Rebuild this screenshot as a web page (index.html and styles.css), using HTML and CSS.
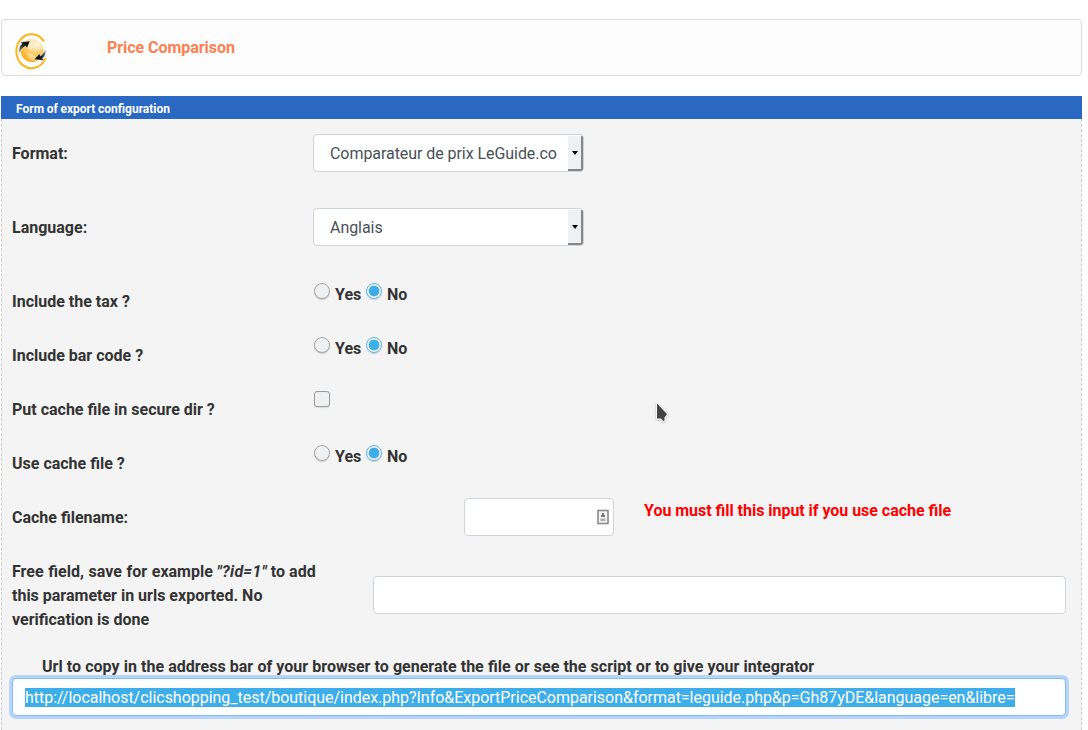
FILE: index.html
```html
<!DOCTYPE html>
<html lang="en">
<head>
<meta charset="utf-8">
<title>Price Comparison</title>
<link rel="stylesheet" href="styles.css">
</head>
<body>
<main class="page">
  <header class="heading">
    <svg class="logo" viewBox="0 0 34 38">
      <defs>
        <radialGradient id="globe" cx=".65" cy=".2" r=".9"><stop offset="0" stop-color="#fff3d4"/><stop offset=".5" stop-color="#fccb66"/><stop offset="1" stop-color="#f9a80c"/></radialGradient>
        <linearGradient id="arrow" x1="0" y1="1" x2="1" y2="0"><stop offset="0" stop-color="#ccc"/><stop offset=".5" stop-color="#222"/><stop offset="1" stop-color="#000"/></linearGradient>
        <linearGradient id="arrow2" x1="0" y1="1" x2="1" y2="0"><stop offset="0" stop-color="#000"/><stop offset=".5" stop-color="#222"/><stop offset="1" stop-color="#bbb"/></linearGradient>
      </defs>
      <path d="M30 9.500A15.200 17 0 1 0 31.500 26" fill="#fff" stroke="#fdb515" stroke-width="2"/>
      <circle cx="18" cy="18.500" r="11.500" fill="url(#globe)"/>
      <path d="M15 9l4-2 1 3-2 3 2 2-2 3-5-2zM21 8l6 2 2 6-4 3-5-4 2-4zM13 21l6 1 3 3-3 4-4-2z" fill="#fff" opacity=".35"/>
      <path d="M4.500 22.500C4.500 17 5.500 13 8 12L6.500 10 16 9 13 16.500 11.500 14C8 15.500 7 18.500 4.500 22.500z" fill="url(#arrow)" stroke="#fff" stroke-width=".5"/>
      <path d="M32 16.500C32 22 31 25 28.500 26L30 28.500 20 27.500 25.500 21.500 26.500 24C29 22 30 20 32 16.500z" fill="url(#arrow2)" stroke="#fff" stroke-width=".5"/>
    </svg>
    <h1 class="title">Price Comparison</h1>
  </header>
  <h2 class="bar">Form of export configuration</h2>
  <form class="panel">
    <div class="row tall">
      <span class="label">Format:</span>
      <div class="select"><span class="value">Comparateur de prix LeGuide.co</span><span class="drop"></span></div>
    </div>
    <div class="row tall">
      <span class="label">Language:</span>
      <div class="select"><span class="value">Anglais</span><span class="drop"></span></div>
    </div>
    <div class="row">
      <span class="label">Include the tax ?</span>
      <div class="options"><i class="radio"></i><span class="yes">Yes</span><i class="radio on"></i><span>No</span></div>
    </div>
    <div class="row">
      <span class="label">Include bar code ?</span>
      <div class="options"><i class="radio"></i><span class="yes">Yes</span><i class="radio on"></i><span>No</span></div>
    </div>
    <div class="row">
      <span class="label">Put cache file in secure dir ?</span>
      <div class="options"><i class="check"></i></div>
    </div>
    <div class="row">
      <span class="label">Use cache file ?</span>
      <div class="options"><i class="radio"></i><span class="yes">Yes</span><i class="radio on"></i><span>No</span></div>
    </div>
    <div class="row cache">
      <span class="label">Cache filename:</span>
      <div class="field">
        <svg class="card" viewBox="0 0 12 16"><rect x="1" y="1.500" width="10" height="13" fill="#f5f5f5" stroke="#8b8b8b" stroke-width="1.600"/><path d="M5 4h2v2h1v2H4V6h1z" fill="#777"/><path d="M3.500 9.500h5v2.500h-5z" fill="#aaa"/></svg>
      </div>
      <span class="warning">You must fill this input if you use cache file</span>
    </div>
    <div class="row free">
      <span class="label"><span class="lead">Free field, save for example</span> <em>"?id=1"</em> to add<br>this parameter in urls exported. No<br>verification is done</span>
      <div class="field"></div>
    </div>
    <div class="url-label">Url to copy in the address bar of your browser to generate the file or see the script or to give your integrator</div>
    <div class="field focused"><span class="selected">http://localhost/clicshopping_test/boutique/index.php?Info&amp;ExportPriceComparison&amp;format=leguide.php&amp;p=Gh87yDE&amp;language=en&amp;libre=</span></div>
  </form>
</main>
<svg class="cursor" viewBox="0 0 14 22"><path d="M1.500 1.500v16.500h4.500l2.500 2.500 1.500-.5v-3.500l2.500-3.500z" fill="#444" stroke="#fff"/></svg>
</body>
</html>
```
FILE: styles.css
```css
* { box-sizing: border-box; }
body {
  margin: 0;
  height: 730px;
  overflow: hidden;
  background: #fff;
  color: #333;
  font: 700 16px/24px Roboto, sans-serif;
}
.page {
  width: 1081px;
  height: 730px;
  margin-left: 1px;
  padding-top: 19px;
  display: flex;
  flex-direction: column;
}
.heading {
  display: flex;
  align-items: flex-start;
  height: 57px;
  margin-bottom: 20px;
  padding: 12px;
  background: #fdfdfd;
  border: 1px solid #ddd;
  border-radius: 4px;
}
.logo { width: 34px; height: 38px; }
.title {
  margin: 4px 0 0 59px;
  color: #ff7f50;
  font-size: 16px;
  line-height: 24px;
  letter-spacing: -0.05px;
}
.bar {
  height: 23px;
  margin: 0;
  padding-left: 15px;
  background: #2969c4;
  color: #fff;
  font-size: 12px;
  line-height: 27px;
  word-spacing: -0.3px;
}
.panel {
  flex: 1;
  padding: 15px 14px 0 10px;
  background: #f4f4f4;
  border: 1px dashed #ccc;
  border-width: 0 1px;
}
.row {
  display: grid;
  grid-template-columns: 301px 1fr;
  height: 54px;
}
.label { padding-top: 1px; }
.tall { height: 74px; }
.tall .label { padding-top: 8px; }
.tall + .row:not(.tall) { height: 61px; padding-top: 7px; }
.select {
  display: flex;
  width: 271px;
  height: 38px;
  background: #fff;
  border: 1px solid #ced4da;
  border-radius: 4px;
  color: #495057;
  font-weight: 400;
  overflow: hidden;
}
.value {
  width: 228px;
  margin: 7px 10px 0 16px;
  white-space: nowrap;
  letter-spacing: -0.06px;
}
.drop {
  display: flex;
  align-items: center;
  justify-content: center;
  width: 15px;
  margin-top: 1px;
  background: #eff0f1;
  border: solid #848688;
  border-width: 0 2px 2px 0;
}
.drop::before {
  content: "";
  margin-left: 1px;
  border: 3px solid transparent;
  border-top: 4px solid #000;
  border-bottom: 0;
}
.options { display: flex; align-items: flex-start; margin-top: -7px; }
.options span { width: 25px; padding-top: 1px; }
.options .yes { width: 31px; }
.radio {
  width: 16px;
  height: 16px;
  margin: 1px 5px 0 1px;
  background: #eff0f1;
  border: 1px solid #a4a7a9;
  border-radius: 50%;
  box-shadow: 0 1px 1px #ccc;
}
.on {
  margin: 1px 5px 0 0;
  border-color: #5db7e8;
  background: radial-gradient(circle, #3daee9 5px, #eff0f1 5.7px);
}
.check {
  width: 16px;
  height: 16px;
  margin: 1px 0 0 1px;
  background: #eff0f1;
  border: 1px solid #999c9e;
  border-radius: 3px;
  box-shadow: 0 1px 1px #ddd;
}
.field {
  height: 38px;
  padding: 6px 12px;
  background: #fff;
  border: 1px solid #ced4da;
  border-radius: 4px;
}
.cache {
  grid-template-columns: 452px 150px 1fr;
}
.cache .field {
  display: flex;
  justify-content: flex-end;
  margin-top: -7px;
  padding: 10px 4px 0;
}
.card { width: 12px; height: 16px; }
.warning { margin: -6px 0 0 30px; color: #f00; word-spacing: -0.15px; }
.free { grid-template-columns: 361px 1fr; height: 95px; }
.free .label { white-space: nowrap; }
.free em { letter-spacing: 0.25px; }
.lead { word-spacing: 0.7px; }
.free .field { margin: 17px 1px 0 0; }
.url-label { height: 24px; padding: 1px 0 0 30px; word-spacing: 0.19px; }
.focused {
  margin-right: 1px;
  border-color: #80bdff;
  box-shadow: 0 0 0 3px #b6d5f8;
  color: #fff;
  font-weight: 400;
  letter-spacing: -0.024px;
}
.selected {
  display: inline-block;
  height: 19px;
  line-height: 19px;
  margin-top: 3px;
  background: #3daee9;
  vertical-align: top;
}
.cursor {
  position: absolute;
  left: 655px;
  top: 401px;
  width: 14px;
  height: 22px;
  filter: drop-shadow(0 1px 1px #bbb);
}
```
